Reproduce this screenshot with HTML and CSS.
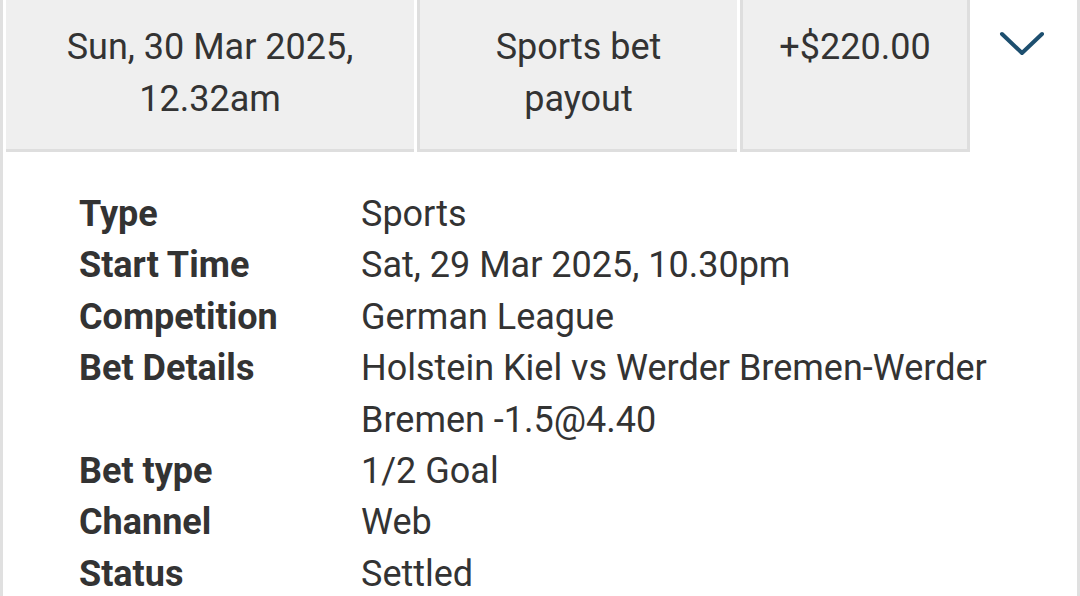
FILE: index.html
```html
<!DOCTYPE html>
<html>
<head>
<meta charset="utf-8">
<link rel="stylesheet" href="styles.css">
</head>
<body>
<div class="panel">
  <div class="summary">
    <div class="cell cell-date">Sun, 30 Mar 2025,<br>12.32am</div>
    <div class="cell cell-type">Sports bet<br>payout</div>
    <div class="cell cell-amount">+$220.00</div>
    <div class="toggle">
      <svg width="46" height="26" viewBox="0 0 46 26"><polyline points="3,3 23,22 43,3" fill="none" stroke="#1d4f6f" stroke-width="4" stroke-linecap="round" stroke-linejoin="round"/></svg>
    </div>
  </div>
  <div class="details">
    <div class="label">Type</div><div class="value">Sports</div>
    <div class="label">Start Time</div><div class="value">Sat, 29 Mar 2025, 10.30pm</div>
    <div class="label">Competition</div><div class="value">German League</div>
    <div class="label">Bet Details</div><div class="value">Holstein Kiel vs Werder Bremen-Werder Bremen -1.5@4.40</div>
    <div class="label">Bet type</div><div class="value">1/2 Goal</div>
    <div class="label">Channel</div><div class="value">Web</div>
    <div class="label">Status</div><div class="value">Settled</div>
  </div>
</div>
</body>
</html>
```

FILE: styles.css
```css
html, body {
  margin: 0;
  padding: 0;
  background: #ffffff;
}
body {
  font-family: Roboto, "Noto Sans", sans-serif;
  color: #333333;
  width: 1080px;
  height: 596px;
  overflow: hidden;
}
.panel {
  border-left: 3px solid #e0e0e0;
  border-right: 3px solid #e0e0e0;
  padding-left: 3px;
  min-height: 596px;
  box-sizing: border-box;
}
.summary {
  display: flex;
  align-items: flex-start;
}
.cell {
  background: #efefef;
  border-bottom: 3px solid #dedede;
  padding-top: 21px;
  box-sizing: border-box;
  height: 152px;
  text-align: center;
  font-size: 36px;
  line-height: 52px;
  white-space: nowrap;
}
.cell-date {
  width: 408px;
  margin-right: 3px;
}
.cell-type {
  width: 320px;
  border-left: 3px solid #dedede;
  margin-right: 3px;
}
.cell-amount {
  width: 230px;
  border-left: 3px solid #dedede;
  border-right: 3px solid #dedede;
}
.toggle {
  flex: 1;
  display: flex;
  justify-content: center;
  padding-top: 31px;
  padding-right: 4px;
}
.details {
  display: grid;
  grid-template-columns: 282px 1fr;
  padding: 37px 60px 0 73px;
  font-size: 36px;
  line-height: 51.4px;
}
.label {
  font-weight: 700;
}
```
